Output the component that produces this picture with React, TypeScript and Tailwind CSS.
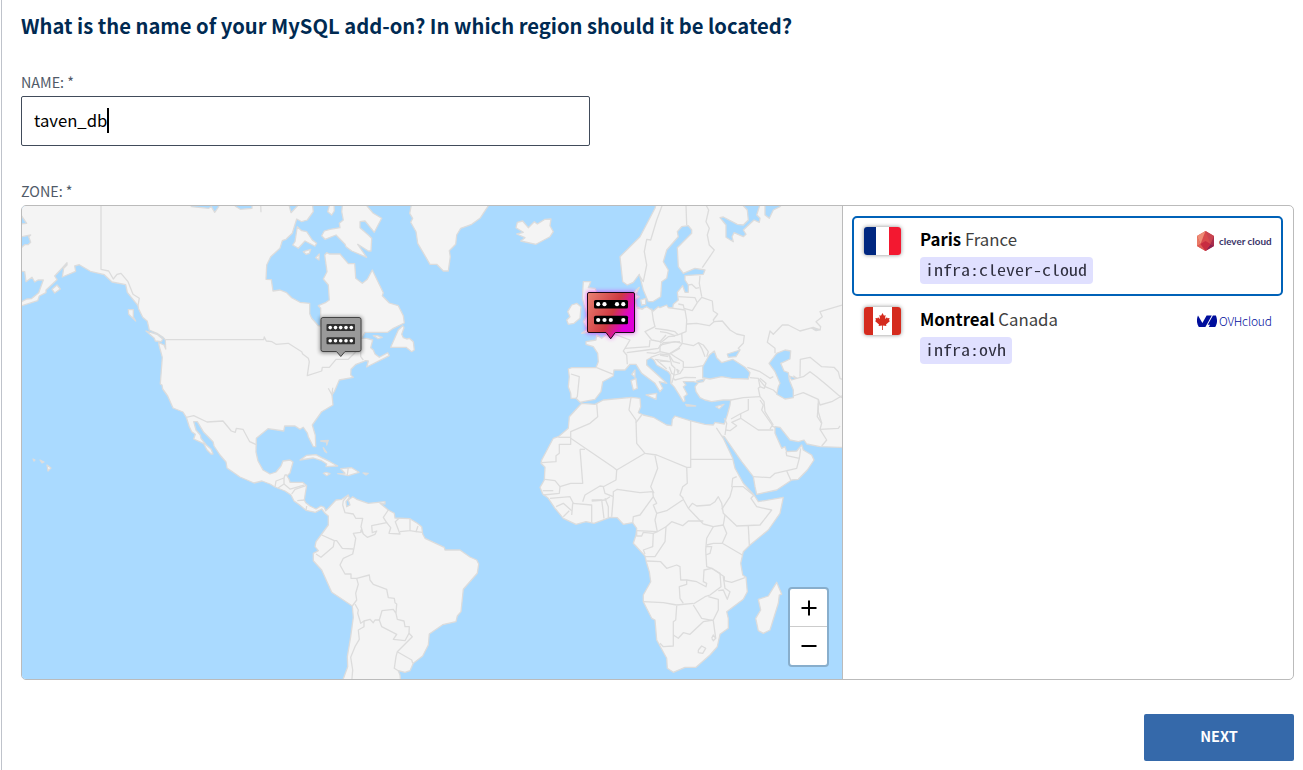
import React from "react";

type Sheet = "S" | "A" | "B" | "C" | "D" | "E" | "F";

/* Map sheets: origin x, origin y and units per pixel. */
const SHEETS: Record<Sheet, [number, number, number]> = {
  S: [0, 0, 1],
  A: [22, 205, 3],
  B: [250, 205, 3],
  C: [500, 205, 3],
  D: [660, 205, 3],
  E: [530, 390, 3],
  F: [290, 430, 3],
};

/* "A 0,0 3,3 B 6,6" -> "22.0,205.0 23.0,206.0 252.0,207.0" */
function project(source: string): string {
  let sheet = SHEETS.S;
  const out: string[] = [];
  for (const token of source.trim().split(/\s+/)) {
    if (token in SHEETS) {
      sheet = SHEETS[token as Sheet];
    } else {
      const [x, y] = token.split(",").map(Number);
      out.push(`${(sheet[0] + x / sheet[2]).toFixed(1)},${(sheet[1] + y / sheet[2]).toFixed(1)}`);
    }
  }
  return out.join(" ");
}

const LAND: string[] = [
  // North and Central America, South America
  `S 10,190 10,300 A 0,302 47,287 52,273 72,263 72,255 105,224 98,213 120,190 135,173 135,180 125,190 121,216 161,199 158,183 172,179 205,199 247,209 270,231 311,239 316,262 348,302 350,312 362,337 376,349 382,375 405,385 422,396 430,404 431,432 426,420 410,413 411,420 421,457 415,537 420,540 422,552 437,573 453,609 483,621 493,637 502,665 509,680 520,688 515,702 545,716
   S 207,450 211,454 213,454 211,449 A 553,720 537,700 535,690 522,675 515,650 526,650 545,682 573,710 S 214,446 220,455 226,462 227,468 240,477 254,483 262,481 270,484 275,487 285,491 291,495 294,501
   F 28,224 48,241 76,247 95,237 105,250 115,258 115,285 95,312 78,335 75,350 85,362 70,370 70,392 95,420 125,487 187,528 190,562 182,620 172,680 173,710 155,760 332,760 330,735 325,722 345,727 360,722 370,700 398,678 415,645 418,612 458,584 498,575 502,558 513,545 520,478 562,430 566,402 560,390 540,381 510,360 465,360 463,352 405,325 398,312 395,290 382,280 360,266 315,264 313,250 295,240 270,220 285,222 285,215 235,220 200,208 188,200 175,210 180,225 170,230 168,215 178,203 175,195 155,208 138,210 115,235 107,242 103,232 93,228 78,237 60,228 47,218 43,210 46,190 50,167 38,157 0,157
   S 289,479 287,476 290,473 293,462 290,460 283,461 281,466 276,472 270,474 263,470 258,461 256,452 A 703,700 715,690 738,671 785,678 788,663 B 135,663 150,673 160,667 172,684 F 55,20 70,50 77,50 76,15 B 195,688 187,660 215,620 249,600 246,570 253,560 268,525 310,517 302,510 303,493 318,478 340,470 345,467 355,468 350,486 418,452 413,443 388,457 375,447 370,435 362,428 368,405 350,400 335,400 345,382 413,382 430,370 463,354 460,332 445,302 418,294 397,272 400,263 367,195 352,223 337,235 317,220 314,176 295,176 270,147 238,147 230,143 224,150 231,200 220,222 235,240 238,285 228,292 205,302 212,310 212,363 205,362 185,340 179,326 179,295 150,292 125,278 110,263 90,255 69,258 64,224 48,223 50,180 62,155 90,130 97,107 108,103 127,85 140,42 155,50 172,45 190,20 185,-20`,
  "B 458,362 445,375 422,427 468,427 485,440 493,435 490,410 478,400 470,402 460,398 455,388 462,368",
  "B 278,-10 275,20 280,45 268,55 270,68 240,73 223,78 215,92 225,103 258,90 285,118 288,125 305,138 350,157 323,118 355,138 363,138 365,100 355,90 330,68 330,50 345,48 373,82 395,40 370,25 340,-10",
  "B 240,-5 233,20 245,30 253,18 252,-5",
  "B 142,65 155,77 170,80 187,105 200,115 195,124 165,108 145,130 128,120 135,110",
  "B 160,140 182,133 178,145 168,148",
  "B 197,158 208,147 207,165",
  "B 370,392 382,392 397,397 385,401",
  "B 485,-5 479,25 488,40 482,52 498,80 503,115 540,178 560,178 580,198 595,198 601,155 598,137 617,118 620,90 632,70 665,58 690,40 720,-5",
  "A 319,314 334,314 334,335 341,348 320,328",
  "A 372,378 405,388 422,402 418,410 400,408 397,400",
  "A 90,253 105,240 115,252 98,264",
  "S 33,459 35,460 34,461",
  "S 40,460 44,462 42,463",
  "S 47,465 51,468 48,471",
  "F 92,33 115,31 110,45 110,36",
  "F 100,53 110,68 104,64",
  "F 30,90 50,76 78,74 95,83 120,95 143,108 108,110 110,102 95,92 70,84",
  "F 100,130 108,127 120,131 110,137",
  "F 143,131 165,130 152,116 185,113 207,127 175,137",
  "F 219,129 235,130 228,135",
  // Europe, Asia and Africa
  `C 470,-10 465,10 420,95 360,155 368,230 382,240 400,232 418,208 430,255 445,290 458,290 482,275 485,230 500,220 505,195 490,170 500,135 535,95 D 52,80 65,65 85,62 95,75 95,85 52,128 55,185 70,205 105,190 135,195 130,208 75,212 75,225 85,240 85,262 75,262 68,242 52,262 55,285 40,298 38,308 25,308 20,300 0,308
   C 475,305 460,318 440,305 425,312 410,305 405,285 418,275 408,268 418,247 405,258 395,275 395,310 380,340 340,385 320,388 305,400 290,390 288,405 258,410 258,418 280,425 293,445 295,470 288,488 215,488 205,492 208,515 205,545 212,565 213,580 228,580 240,592 250,590 285,583 303,560 308,530 340,513 342,495 375,495 390,478 408,478 425,505 465,535 480,560 488,550 478,530 500,535 440,480 440,465 452,458 462,465 470,480 505,500 512,510 512,535 522,545
   D 55,565 70,590 75,588 72,575 82,568 70,545 78,540 70,530 100,530 115,533 105,545 108,560 120,578 135,585 155,590 190,585 212,585 210,600 E 592,75 583,102 555,97 550,105 525,103 480,92 435,78 427,88 425,107 410,105 370,82 340,75 325,68 332,50 330,25 305,22 220,30 195,43 155,40 150,45 118,80 115,115 85,140 70,145 35,210 33,220 45,232 43,270 30,292 38,312 55,325 75,355 100,385 138,403 168,395 192,400 240,382 262,383 280,403 308,398 320,415 318,435 310,460 345,498 350,520 358,545 362,575 340,615 340,635 365,685 375,690 380,750 410,805 412,835 430,847 465,832 498,832 540,795 562,770 570,733 595,715 595,685 590,665 640,628 652,605 648,562 638,555 632,520 640,485 660,465 715,420 750,370 760,322 685,335 672,315 640,280 615,235 608,205 580,145 560,115 575,138 583,140 635,215 670,260 675,290 680,313 740,300 785,270 805,268 832,240 852,210 845,195 820,180 815,165 800,183 770,185 765,170 755,175 735,130 735,110 750,112 780,150 805,155 822,150 830,162 870,170 930,172 980,172 S 870,190`,
  "C 52,52 68,48 85,68 103,50 112,57 135,43 153,42 150,62 160,80 150,95 108,118 62,108 75,98 50,87 70,82 48,68",
  "C 215,300 230,295 243,305 240,340 222,355 205,358 200,345 210,335 203,320",
  "C 250,230 272,230 265,248 285,250 300,280 330,360 320,375 290,378 245,385 262,372 250,350 262,330 255,310 247,280",
  "C 422,285 437,280 437,298 425,300",
  "C 438,570 470,565 468,583",
  "C 393,527 408,520 412,550 400,555",
  "C 395,508 405,495 405,517",
  "D 77,598 107,603 80,603",
  "D 168,605 192,598 178,611",
  "E 740,577 755,613 748,615 745,640 720,720 700,730 685,722 677,685 692,660 685,628 715,618",
];

const WATER: string[] = [
  "A -10,20 14,55 -10,58",
  "A -10,97 26,90 20,95 26,112 18,119 8,119 -10,135",
  "A -10,198 8,200 12,230 30,217 38,231 48,225 64,225 50,263 28,281 14,282 -10,295",
  "A 508,5 560,10 568,5 578,22 590,5 590,-8 508,-8",
  "A 640,4 655,13 690,10 690,-8 640,-8",
  "B 115,-8 123,23 142,3 142,-8",
  "D 240,-8 262,15 265,45 250,60 232,58 190,36 180,38 198,60 198,97 220,110 216,95 222,83 250,95 258,88 250,75 282,45 298,52 300,40 290,30 302,-8",
  "D 315,5 315,30 328,40 340,15 360,5 370,-8 315,-8",
  "D 163,438 148,450 128,485 128,518 150,522 185,515 215,520 265,522 270,503 255,487 218,463 185,473 170,458",
  "D 202,447 240,435 228,455 205,457",
  "D 110,527 135,522 130,530 112,533",
  "D 350,445 375,435 392,438 390,462 362,475 372,498 385,503 388,525 400,555 400,578 375,582 350,568 355,545 360,535 345,500 327,475",
  "D 388,513 410,520 395,525",
  "D 455,370 480,374 468,377",
  "D 50,493 57,497 54,503",
];

const BORDERS: string[] = [
  "A 237,0 237,193 260,198 274,222 285,208 297,205 318,230 333,268 352,280 348,302",
  "A 716,0 717,22",
  "A 431,404 725,404 727,396 733,408 750,410 762,418 798,415 B 115,415 155,440 158,447 175,460 178,470 172,512 215,498 217,487 238,487 258,463 295,463 308,450 332,425 332,455 340,465",
  "B 235,550 246,570 248,548",
  "A 493,637 515,632 555,651 603,648 628,678 640,682 643,670 663,673 683,710 705,720",
  "S 275,487 276,481 284,478 285,475 287,475",
  "S 284,478 284,484 278,488",
  "S 284,484 290,489 304,485",
  "F 5,192 15,178 48,167",
  "F 22,212 45,210",
  "F 48,241 50,228",
  "F 175,195 160,212 158,225 165,248 190,252 197,265 218,265 213,290 220,312 213,300 212,307 190,310 197,325 193,350 188,372 160,385 150,405 165,432 183,432 183,445 200,445 238,435 240,450 250,463 290,478 295,503 313,505 315,518 320,522 318,550 322,568 342,573 345,590 358,590 357,610 345,632 310,628 320,613 275,590 268,570 276,542 310,538 318,550",
  "F 295,240 280,262 290,278 245,287 247,308 260,303 255,313 232,322 220,312",
  "F 290,278 302,293 297,310 330,312 316,275 327,265",
  "F 330,305 360,302 360,266",
  "F 360,302 378,305 384,288",
  "F 378,305 398,307",
  "F 95,315 133,332 130,350 93,382 78,372",
  "F 133,332 140,332 157,355 190,357",
  "F 200,445 205,463 197,490 200,510 187,528",
  "F 195,522 205,540 203,550 212,580 222,573 222,590 205,600 208,628 195,650 182,682 188,720 185,755",
  "F 222,573 240,568 250,578 255,570 268,570",
  "F 357,610 367,620 322,665 318,680 313,715 325,722",
  "F 322,665 365,690 368,700",
  "F 175,113 172,135",
  "C 487,0 470,45 452,105 440,103 433,140 440,180 430,230 420,215",
  "D 78,0 80,60",
  "D 138,0 146,15 138,50 148,70 142,90 148,120 163,135 127,188",
  "D 120,212 118,235 125,275",
  "D 85,240 95,238 108,250 118,248",
  "D 55,275 105,278 112,293 97,317 72,310 70,300 55,297",
  "D 112,293 125,277 157,288 160,318 173,327 160,345 162,350 187,348 210,375 230,387 253,392 250,415 235,430 240,435",
  "D 25,308 75,315 80,345 78,380 65,385 67,413",
  "D 80,357 110,355 148,362 162,350",
  "D 0,380 20,383 45,392 67,385",
  "D 0,415 25,395 45,393",
  "D 0,420 45,410 67,415 55,430 30,445 45,455 70,470 70,487 100,487 130,482",
  "D 67,415 100,422 115,413 130,420 145,440 140,455",
  "D 115,413 125,430 135,455",
  "D 28,450 35,480 45,490 40,520 45,525 75,517 108,518",
  "D 0,468 28,470",
  "D 0,450 25,455",
  "D 28,485 35,505 45,510 60,505 70,490",
  "D 35,535 40,520",
  "C 455,310 460,345 465,365 435,380 455,405 480,410 498,390",
  "C 465,370 500,375 525,380 535,390",
  "C 450,405 448,425 375,430 370,438 380,450 382,478",
  "C 375,430 390,405 345,388",
  "C 380,443 440,435 475,430 490,413 540,410",
  "C 480,420 480,440 465,445 440,443",
  "C 480,440 510,447 540,430",
  "C 452,457 480,447 508,450 520,470 540,475",
  "C 465,463 510,470",
  "C 470,465 500,492",
  "C 213,507 238,515 232,575 228,580",
  "C 290,488 340,508",
  "C 412,310 430,312",
  "D 262,487 300,500 330,520 340,515",
  "D 270,518 295,520 315,545 340,555 350,565",
  "D 295,520 300,545 295,550 300,575 312,590 315,620 340,660",
  "D 300,520 318,535 313,550 300,545",
  "D 212,585 250,578 300,575",
  "D 265,582 265,615 240,627 213,642",
  "D 345,445 345,430 322,412 330,378 340,388 367,360 385,360 420,378 460,367 480,375 482,365 468,350 487,335 480,320 546,300",
  "D 420,515 421,463 450,457 485,485 522,487 535,500 540,520 546,523",
  "D 400,512 410,520 430,515 450,500 470,515 500,540 535,570 546,578",
  "D 400,573 430,563 475,583 480,600 515,590 546,572",
  "D 475,583 475,620 485,655",
  "E 632,72 632,85 685,120 730,120",
  "E 690,30 700,45 695,60 730,110",
  "E 632,85 605,97 620,107 600,122 587,120",
  "E 583,85 590,100 585,135",
  "E 720,118 725,108 735,112",
  "E 670,260 720,263 735,250 800,235 808,205 770,197 768,185",
  "E 770,243 782,270",
  "E 808,205 812,175",
  "E 865,40 862,80 875,100 870,118 890,150 875,168",
  "E 870,118 925,115 930,108",
  "E 200,40 203,80 180,100 122,125 122,163 88,163 88,190 78,197 78,215 35,218",
  "E 85,142 122,142",
  "E 122,145 250,232 260,240 345,190",
  "E 150,178 158,280 122,280 90,290 75,272 45,268",
  "E 150,178 165,178",
  "E 303,22 297,60 318,90 320,160 345,190 380,195 470,232 482,232 482,92",
  "E 318,98 335,75",
  "E 482,208 608,208",
  "E 470,232 472,280 458,290 450,315 460,325",
  "E 260,240 258,270 220,290 225,310 250,320",
  "E 375,197 383,235 362,290 372,310",
  "E 250,320 250,305 262,298 330,308 368,305 370,320 330,375 310,380 308,398",
  "E 370,320 380,340 370,345 380,370 410,362 458,330",
  "E 380,370 375,390 382,425 320,422",
  "E 458,325 475,355 520,402",
  "E 475,355 487,340 500,348 540,345 555,335 565,320 575,340 580,370 620,408 690,405 725,360 680,350 663,325 672,315",
  "E 575,358 600,320 608,290 640,290 670,315",
  "E 605,292 608,265 620,260",
  "E 520,402 550,410 580,405 590,430 577,460 637,495",
  "E 580,405 585,375",
  "E 655,408 658,465",
  "E 382,425 408,410 425,395 458,407 475,393 520,393",
  "E 408,410 405,455 375,500 345,500",
  "E 370,430 340,427 335,438 320,438 320,422",
  "E 382,425 370,430 368,470 340,480 345,492",
  "E 530,465 550,460 577,460",
  "E 550,410 530,445 527,480 530,530 545,535",
  "E 527,495 540,490 545,470 527,470",
  "E 350,513 392,515 410,535 440,525 450,530 452,570 470,570 470,583 448,590 450,625 460,640",
  "E 470,570 500,575 528,590 530,580 520,575 522,540 545,535 570,550 573,590 540,615 525,620 490,642",
  "E 340,635 400,638 440,645 490,640",
  "E 440,648 437,690 430,695 430,768 400,770 390,760",
  "E 430,735 445,745 460,728 480,733 520,695 550,690 565,660 565,628 535,620",
  "E 490,645 515,685 550,692 557,745",
  "E 545,535 583,560 583,572 605,577 645,563",
  "E 580,560 585,595 600,605 592,628 580,600 565,602",
  "E 505,780 515,768 527,775 518,790 505,788 505,780",
  "E 545,745 550,735 557,745 550,752 545,745",
  "E 128,340 125,375",
  "E 128,340 185,345 185,398",
  "E 185,330 215,330 222,385",
  "E 225,325 235,350 235,383",
  "E 250,320 245,380",
  "E 158,335 165,315 210,288 222,290",
  "E 185,333 225,330 240,320",
  "E 60,325 120,320 130,340",
  "E 90,290 88,310 40,315",
  "E 38,302 70,302",
  "E 78,350 100,340 125,362",
  "E 100,380 118,362",
];

const dots = (xs: number[], y: number, r: number) =>
  xs.map((x) => <circle key={`${x}-${y}`} cx={x} cy={y} r={r} fill="#fff" />);

function WorldMap() {
  return (
    <svg className="block h-full w-full" viewBox="22 206 820 473" preserveAspectRatio="xMinYMin slice">
      <defs>
        <linearGradient id="active" x1="0" y1="0" x2="1" y2="0.5">
          <stop offset="0" stopColor="#ea8472" />
          <stop offset="0.6" stopColor="#cf3942" />
          <stop offset="0.92" stopColor="#e000d8" />
        </linearGradient>
        <filter id="glow" x="-40%" y="-40%" width="180%" height="180%">
          <feGaussianBlur stdDeviation="2.600" />
        </filter>
        <filter id="soft" x="-40%" y="-40%" width="180%" height="180%">
          <feGaussianBlur stdDeviation="2" />
        </filter>
      </defs>
      <rect x="22" y="206" width="820" height="473" fill="#aadaff" />
      <g stroke="#dcdcdc" strokeWidth="1.3" strokeLinejoin="round">
        {LAND.map((p) => (
          <polygon key={p} points={project(p)} fill="#f4f4f4" />
        ))}
        {WATER.map((p) => (
          <polygon key={p} points={project(p)} fill="#aadaff" />
        ))}
        {BORDERS.map((p) => (
          <polyline key={p} points={project(p)} fill="none" />
        ))}
      </g>
      <rect x="320" y="317" width="42" height="36" rx="2" fill="#000" opacity="0.45" filter="url(#soft)" />
      <path
        d="M323 317.500H359Q361 317.500 361 319.500V349.500Q361 351.500 359 351.500H345L340.800 356.500L336.500 351.500H323Q321 351.500 321 349.500V319.500Q321 317.500 323 317.500Z"
        fill="#999"
        stroke="#444"
      />
      <rect x="326.500" y="324" width="28.500" height="7" rx="1" fill="#303030" />
      <rect x="326.500" y="337.200" width="28.500" height="7" rx="1" fill="#303030" />
      {dots([330.2, 335.5, 340.7, 346, 351.3], 327.6, 1.8)}
      {dots([330.2, 335.5, 340.7, 346, 351.3], 340.8, 1.8)}
      <path d="M587 292H635V333H615L611 339L606 333H587Z" fill="#e010f0" opacity="0.75" filter="url(#glow)" />
      <path
        d="M589 292.500H633Q634.500 292.500 634.500 294V331Q634.500 332.500 633 332.500H615.300L610.700 338.800L606 332.500H589Q587.500 332.500 587.500 331V294Q587.500 292.500 589 292.500Z"
        fill="url(#active)"
        stroke="#1a0a14"
      />
      <rect x="594" y="300" width="34" height="8.500" rx="1.500" fill="#000" />
      <rect x="594" y="315.700" width="34" height="8.500" rx="1.500" fill="#000" />
      {dots([598.2, 604.5, 617, 623.3], 304.2, 2.1)}
      {dots([598.2, 604.5, 610.8, 623.3], 320, 2.1)}
    </svg>
  );
}

function FranceFlag() {
  return (
    <div className="mt-px flex h-7 w-[37px] overflow-hidden rounded-[3px] shadow-[0_0_4px_rgba(0,0,0,0.45)]">
      <div className="flex-1 bg-[#002780]" />
      <div className="flex-1 bg-white" />
      <div className="flex-1 bg-[#f31830]" />
    </div>
  );
}

function CanadaFlag() {
  return (
    <div className="mt-px flex h-7 w-[37px] overflow-hidden rounded-[3px] shadow-[0_0_4px_rgba(0,0,0,0.45)]">
      <div className="w-[9px] bg-[#d52b1e]" />
      <div className="flex flex-1 items-center justify-center bg-white">
        <svg width="15" height="17" viewBox="0 0 15 17">
          <path
            d="M7.500 0L9 2.700L10.600 2L10 6L12 4.200L12.400 5.300L14.600 5L14 7.300L15 8L11 11.500L11.400 13L7.900 12.500V17H7.100V12.500L3.600 13L4 11.500L0 8L1 7.300L.4 5L2.600 5.300L3 4.200L5 6L4.400 2L6 2.700Z"
            fill="#d52b1e"
          />
        </svg>
      </div>
      <div className="w-[9px] bg-[#d52b1e]" />
    </div>
  );
}

function CleverLogo() {
  return (
    <div className="flex h-5 items-center gap-[5px]">
      <svg className="shrink-0" width="17" height="20" viewBox="0 0 17 20">
        <path d="M8.500 0L17 5V15L8.500 20L0 15V5Z" fill="#d84a4c" />
        <path d="M8.500 0L3.500 13L0 5Z" fill="#ee8d76" />
        <path d="M0 5L3.500 13L0 15Z" fill="#ea7a66" />
        <path d="M0 15L3.500 13L8.500 20Z" fill="#dd5c54" />
        <path d="M8.500 0L17 5L13.500 13Z" fill="#c94450" />
        <path d="M17 5V15L13.500 13Z" fill="#a82c4c" />
        <path d="M17 15L8.500 20L13.500 13Z" fill="#8c2150" />
        <path d="M3.500 13L8.500 10L13.500 13L8.500 20Z" fill="#c82c40" />
      </svg>
      <span className="font-[Lato] text-[9.900px] leading-[18px] font-bold whitespace-nowrap text-[#3a3468]">
        clever cloud
      </span>
    </div>
  );
}

function OvhLogo() {
  return (
    <div className="flex h-5 items-center gap-[2px]">
      <svg className="shrink-0" width="20" height="12" viewBox="0 0 20 12">
        <path d="M1 0.500L5.400 8L9.600 0.500H14.800L8.400 12H1.800C-.6 8.500-.5 4 1 .5Z" fill="#000e9c" />
        <path d="M18.900 .5C20.500 4 20.500 8.500 18.200 12H11.800L13 9.700H10.700L15.900 .5Z" fill="#000e9c" />
      </svg>
      <span className="text-[12px] leading-5 font-light tracking-[-0.2px] whitespace-nowrap text-[#000e9c]">
        OVHcloud
      </span>
    </div>
  );
}

interface ZoneProps {
  city: string;
  country: string;
  tag: string;
  tagWidth: string;
  selected?: boolean;
  flag: React.ReactNode;
  logo: React.ReactNode;
}

function Zone({ city, country, tag, tagWidth, selected, flag, logo }: ZoneProps) {
  return (
    <div
      className={
        selected
          ? "flex h-20 items-start rounded-[5px] border-2 border-[#0062b8] pt-2 pr-2 pl-[9px]"
          : "flex h-20 items-start rounded-[5px] border-2 border-transparent pt-2 pr-2 pl-[9px]"
      }
    >
      <div className="mr-[19px] ml-px">{flag}</div>
      <div className="flex flex-1 flex-col items-start">
        <div className="h-7 text-[16.800px] leading-[26px] text-[#404040]">
          <span className="font-bold text-black">{city}</span> {country}
        </div>
        <div className={`mt-[3px] h-[27px] overflow-hidden rounded bg-[#e0e0ff] pl-[5px] whitespace-nowrap ${tagWidth}`}>
          <span className="inline-block origin-left scale-x-[1.2] font-['Noto_Sans_Mono_CJK_JP','Liberation_Mono',monospace] text-[15px] leading-[25px] text-[#303040]">
            {tag}
          </span>
        </div>
      </div>
      <div className="mt-[5px] w-[76px]">{logo}</div>
    </div>
  );
}

export default function App() {
  return (
    <div className="flex h-[770px] w-[1303px] overflow-hidden bg-white pl-px font-['Noto_Sans_CJK_JP',sans-serif]">
      <div className="w-px bg-[#bfc3cb]" />
      <main className="flex flex-1 flex-col pr-[9px] pl-[19px]">
        <h1 className="mt-[11px] h-[30px] text-[20.190px] leading-[30px] font-bold whitespace-nowrap text-[#002a52]">
          What is the name of your MySQL add-on? In which region should it be located?
        </h1>
        <label className="mt-[31px] flex h-5 items-center text-[14.300px] leading-5 text-[#505a68]">NAME: *</label>
        <div className="mt-1 flex h-[50px] w-[569px] items-center rounded-[2px] border border-[#414b5a] px-3 pb-[2px]">
          <span className="text-[16.700px] leading-6 text-black">taven_db</span>
          <span className="h-[25px] w-[2px] bg-black" />
        </div>
        <label className="mt-[35px] flex h-5 items-center text-[14.300px] leading-5 text-[#505a68]">ZONE: *</label>
        <section className="mt-[4px] flex h-[475px] w-[1273px] overflow-hidden rounded-[5px] border border-[#bbb]">
          <div className="relative h-full w-[820px] shrink-0">
            <WorldMap />
            <div className="absolute right-[13px] bottom-[12px] flex h-20 w-[41px] flex-col rounded-[4px] border-2 border-black/20 bg-white bg-clip-padding">
              <div className="flex h-[38px] items-center justify-center border-b border-[#ccc]">
                <svg width="16" height="16" viewBox="0 0 16 16">
                  <path d="M0.500 8H15.500M8 0.500V15.500" stroke="#000" strokeWidth="2" />
                </svg>
              </div>
              <div className="flex flex-1 items-center justify-center">
                <svg width="16" height="16" viewBox="0 0 16 16">
                  <path d="M0.500 8H15.500" stroke="#000" strokeWidth="2" />
                </svg>
              </div>
            </div>
          </div>
          <div className="flex flex-1 flex-col border-l border-[#bbb] py-[10px] pr-[10px] pl-[9px]">
            <Zone
              city="Paris"
              country="France"
              tag="infra:clever-cloud"
              tagWidth="w-[173px]"
              selected
              flag={<FranceFlag />}
              logo={<CleverLogo />}
            />
            <Zone
              city="Montreal"
              country="Canada"
              tag="infra:ovh"
              tagWidth="w-[92px]"
              flag={<CanadaFlag />}
              logo={<OvhLogo />}
            />
          </div>
        </section>
        <button className="mt-[34px] flex h-[47px] w-[150px] items-center justify-center self-end rounded-[2px] bg-[#3569aa] pb-[3px] text-[14.500px] leading-6 font-bold text-white">
          NEXT
        </button>
      </main>
    </div>
  );
}
